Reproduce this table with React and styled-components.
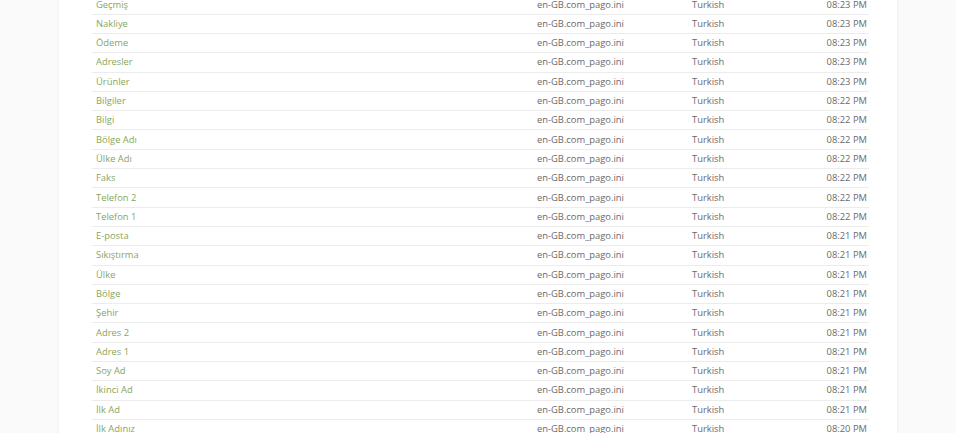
import React from "react";
import styled, {createGlobalStyle} from "styled-components";

const GlobalStyle = createGlobalStyle`
  html, body {
    margin: 0;
    padding: 0;
    background: #fafafa;
    overflow: hidden;
  }
  body {
    font-family: "Open Sans", "Liberation Sans", sans-serif;
  }
`;

const Page = styled.div`
  width: 956px;
  height: 433px;
  overflow: hidden;
  box-sizing: border-box;
  padding: 0 59px 0 59px;
`;

const Card = styled.div`
  background: #ffffff;
  width: 838px;
  height: 460px;
  box-shadow: 0 0 3px rgba(0, 0, 0, 0.08);
  padding: 0 28px 0 33px;
  box-sizing: border-box;
  margin-top: -20px;
`;

const Table = styled.div`
  display: flex;
  flex-direction: column;
  padding-top: 15.4px;
`;

const Row = styled.div`
  display: grid;
  grid-template-columns: 441px 155px 1fr 90px;
  align-items: center;
  height: 19.3px;
  box-sizing: border-box;
  border-bottom: 1px solid #ececec;
  font-size: 9.4px;
  color: #6a6a6a;
`;

const Cell = styled.div`
  padding: 0 ${p => (p.$right ? "2px" : "0")} 0 ${p => (p.$right ? "0" : "4px")};
  text-align: ${p => (p.$right ? "right" : "left")};
  white-space: nowrap;
  line-height: 18px;
`;

const NameLink = styled.a`
  color: #88a65e;
  text-decoration: none;
  cursor: pointer;
`;

const rows = [
    ["Geçmiş", "08:23 PM"],
    ["Nakliye", "08:23 PM"],
    ["Ödeme", "08:23 PM"],
    ["Adresler", "08:23 PM"],
    ["Ürünler", "08:23 PM"],
    ["Bilgiler", "08:22 PM"],
    ["Bilgi", "08:22 PM"],
    ["Bölge Adı", "08:22 PM"],
    ["Ülke Adı", "08:22 PM"],
    ["Faks", "08:22 PM"],
    ["Telefon 2", "08:22 PM"],
    ["Telefon 1", "08:22 PM"],
    ["E-posta", "08:21 PM"],
    ["Sıkıştırma", "08:21 PM"],
    ["Ülke", "08:21 PM"],
    ["Bölge", "08:21 PM"],
    ["Şehir", "08:21 PM"],
    ["Adres 2", "08:21 PM"],
    ["Adres 1", "08:21 PM"],
    ["Soy Ad", "08:21 PM"],
    ["İkinci Ad", "08:21 PM"],
    ["İlk Ad", "08:21 PM"],
    ["İlk Adınız", "08:20 PM"],
    ["Ad", "08:20 PM"],
];

function App() {
    return (
        <Page>
            <GlobalStyle/>
            <Card>
                <Table>
                    {rows.map((r, i) => (
                        <Row key={i}>
                            <Cell><NameLink>{r[0]}</NameLink></Cell>
                            <Cell>en-GB.com_pago.ini</Cell>
                            <Cell>Turkish</Cell>
                            <Cell $right>{r[1]}</Cell>
                        </Row>
                    ))}
                </Table>
            </Card>
        </Page>
    );
}

export default App;
